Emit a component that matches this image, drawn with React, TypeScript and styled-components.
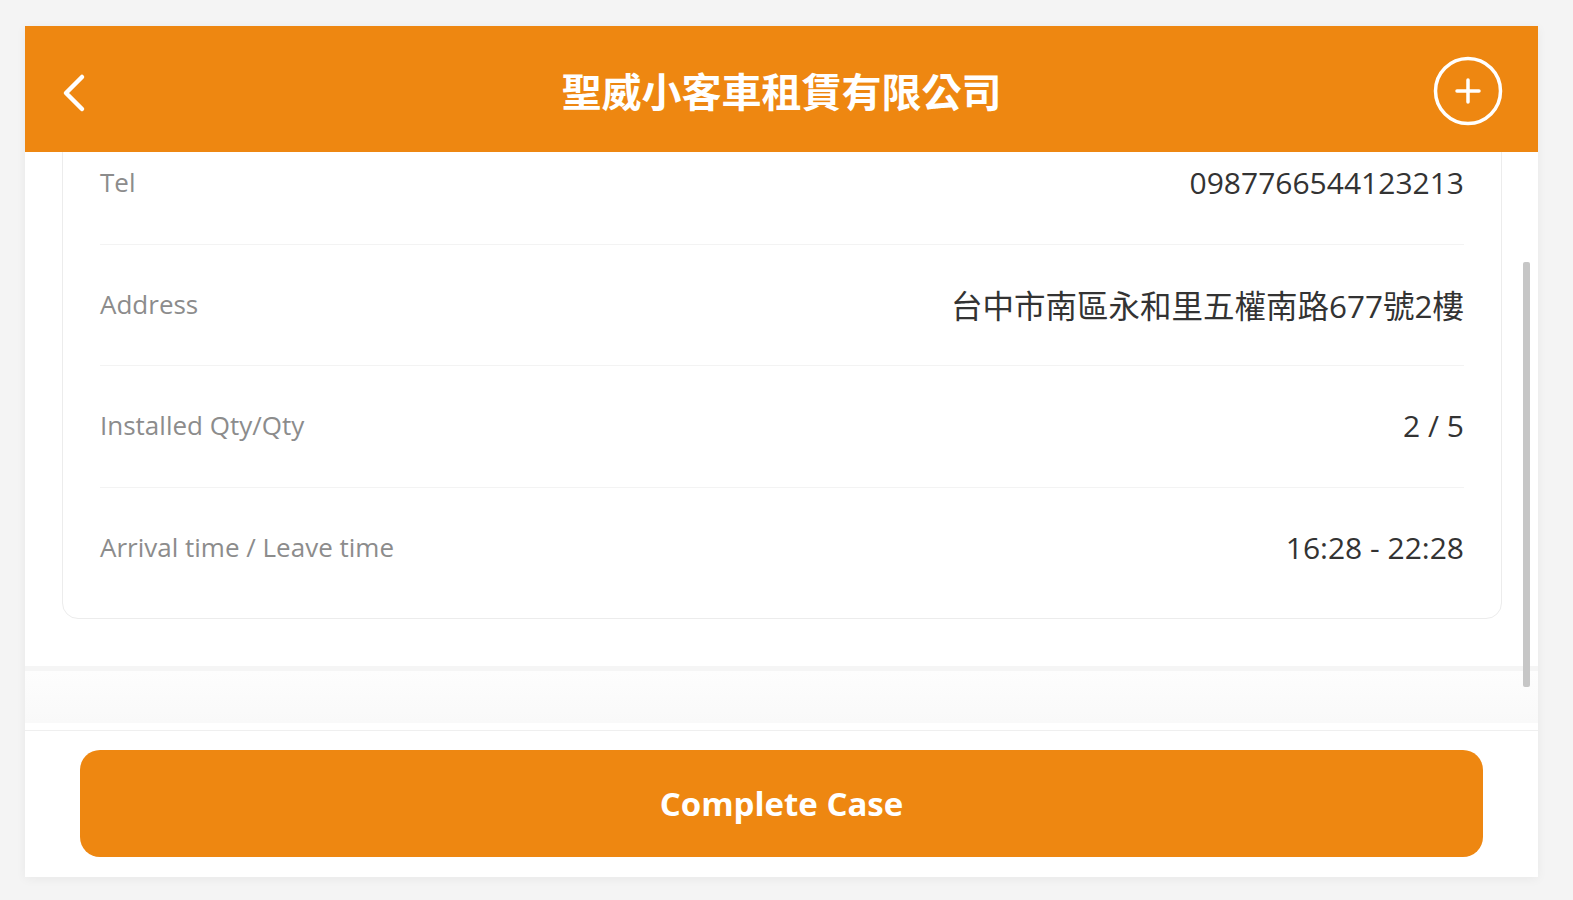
import styled, { createGlobalStyle } from 'styled-components';

const GlobalStyle = createGlobalStyle`
    html, body {
        margin: 0;
        padding: 0;
        background: #f4f4f4;
        font-family: "Open Sans", "Noto Sans CJK TC", sans-serif;
    }
`;

const orange = '#ee8711';

const Page = styled.div`
    padding: 26px 35px 23px 25px;
`;

const Frame = styled.div`
    width: 1513px;
    height: 851px;
    background: #fff;
    display: flex;
    flex-direction: column;
    box-shadow: 0 2px 10px rgba(0, 0, 0, 0.05);
`;

const Header = styled.header`
    height: 126px;
    flex: none;
    background: ${orange};
    display: grid;
    grid-template-columns: 110px 1fr 110px;
    align-items: center;
    position: relative;
    z-index: 2;
`;

const Title = styled.h1`
    margin: 0;
    text-align: center;
    color: #fff;
    font-family: "Noto Sans CJK TC", sans-serif;
    font-weight: 700;
    font-size: 40px;
    line-height: 1;
    padding-top: 2px;
`;

const IconButton = styled.button<{ $side: 'left' | 'right'; $drop?: number }>`
    border: 0;
    background: transparent;
    padding: 0;
    display: flex;
    justify-content: ${({ $side }) => ($side === 'left' ? 'flex-start' : 'flex-end')};
    padding-left: ${({ $side }) => ($side === 'left' ? '36px' : '0')};
    padding-right: ${({ $side }) => ($side === 'right' ? '35px' : '0')};
    padding-top: ${({ $drop = 0 }) => `${$drop}px`};
    cursor: pointer;
`;

const Body = styled.div`
    flex: 1;
    position: relative;
    overflow: hidden;
    display: flex;
    flex-direction: column;
`;

const ScrollArea = styled.div`
    flex: 1;
    overflow: hidden;
    padding: 0 36px 0 37px;
`;

const Card = styled.section`
    margin-top: -30px;
    border: 1px solid #ececec;
    border-radius: 16px;
    padding: 0 37px 9px 37px;
`;

const Row = styled.div<{ $last?: boolean }>`
    height: 121.5px;
    display: flex;
    align-items: center;
    justify-content: space-between;
    border-bottom: ${({ $last }) => ($last ? 'none' : '1px solid #f3f3f3')};
    padding-bottom: 2px;
    box-sizing: border-box;
`;

const Label = styled.span`
    color: #8c8c8c;
    font-size: 26px;
`;

const Value = styled.span<{ $cjk?: boolean }>`
    color: #333;
    font-size: ${({ $cjk }) => ($cjk ? '31.5px' : '30px')};
    font-family: "Open Sans", "Noto Sans CJK TC", sans-serif;
`;

const NextSection = styled.div`
    margin-top: 47px;
    height: 52px;
    border-top: 5px solid #f5f5f5;
    background: linear-gradient(to bottom, #fdfdfd, #f9f9f9);
    margin-left: -37px;
    margin-right: -36px;
`;

const ScrollThumb = styled.div`
    position: absolute;
    right: 8px;
    top: 110px;
    width: 7px;
    height: 425px;
    background: #c6c6c6;
    border-radius: 2px;
`;

const Footer = styled.footer`
    flex: none;
    border-top: 1px solid #efefef;
    padding: 19px 55px 20px 55px;
`;

const PrimaryButton = styled.button`
    width: 100%;
    height: 107px;
    border: 0;
    border-radius: 20px;
    background: ${orange};
    color: #fff;
    font-family: "Open Sans", sans-serif;
    font-size: 33px;
    font-weight: 700;
    cursor: pointer;
`;

const rows = [
    { label: 'Tel', value: '0987766544123213' },
    { label: 'Address', value: '台中市南區永和里五權南路677號2樓', cjk: true },
    { label: 'Installed Qty/Qty', value: '2 / 5' },
    { label: 'Arrival time / Leave time', value: '16:28 - 22:28' },
];

export default function App() {
    return (
        <>
            <GlobalStyle />
            <Page>
                <Frame>
                    <Header>
                        <IconButton $side="left" $drop={7} aria-label="back">
                            <svg width="26" height="40" viewBox="0 0 26 40">
                                <path d="M21 4 L5 20 L21 36" fill="none" stroke="#fff" strokeWidth="4.5" strokeLinecap="round" strokeLinejoin="round" />
                            </svg>
                        </IconButton>
                        <Title>聖威小客車租賃有限公司</Title>
                        <IconButton $side="right" $drop={3} aria-label="add">
                            <svg width="70" height="70" viewBox="0 0 70 70">
                                <circle cx="35" cy="35" r="32.5" fill="none" stroke="#fff" strokeWidth="3.5" />
                                <path d="M35 24 V46 M24 35 H46" stroke="#fff" strokeWidth="3.5" strokeLinecap="round" />
                            </svg>
                        </IconButton>
                    </Header>
                    <Body>
                        <ScrollArea>
                            <Card>
                                {rows.map((r, i) => (
                                    <Row key={r.label} $last={i === rows.length - 1}>
                                        <Label>{r.label}</Label>
                                        <Value $cjk={r.cjk}>{r.value}</Value>
                                    </Row>
                                ))}
                            </Card>
                            <NextSection />
                        </ScrollArea>
                        <ScrollThumb />
                        <Footer>
                            <PrimaryButton>Complete Case</PrimaryButton>
                        </Footer>
                    </Body>
                </Frame>
            </Page>
        </>
    );
}
